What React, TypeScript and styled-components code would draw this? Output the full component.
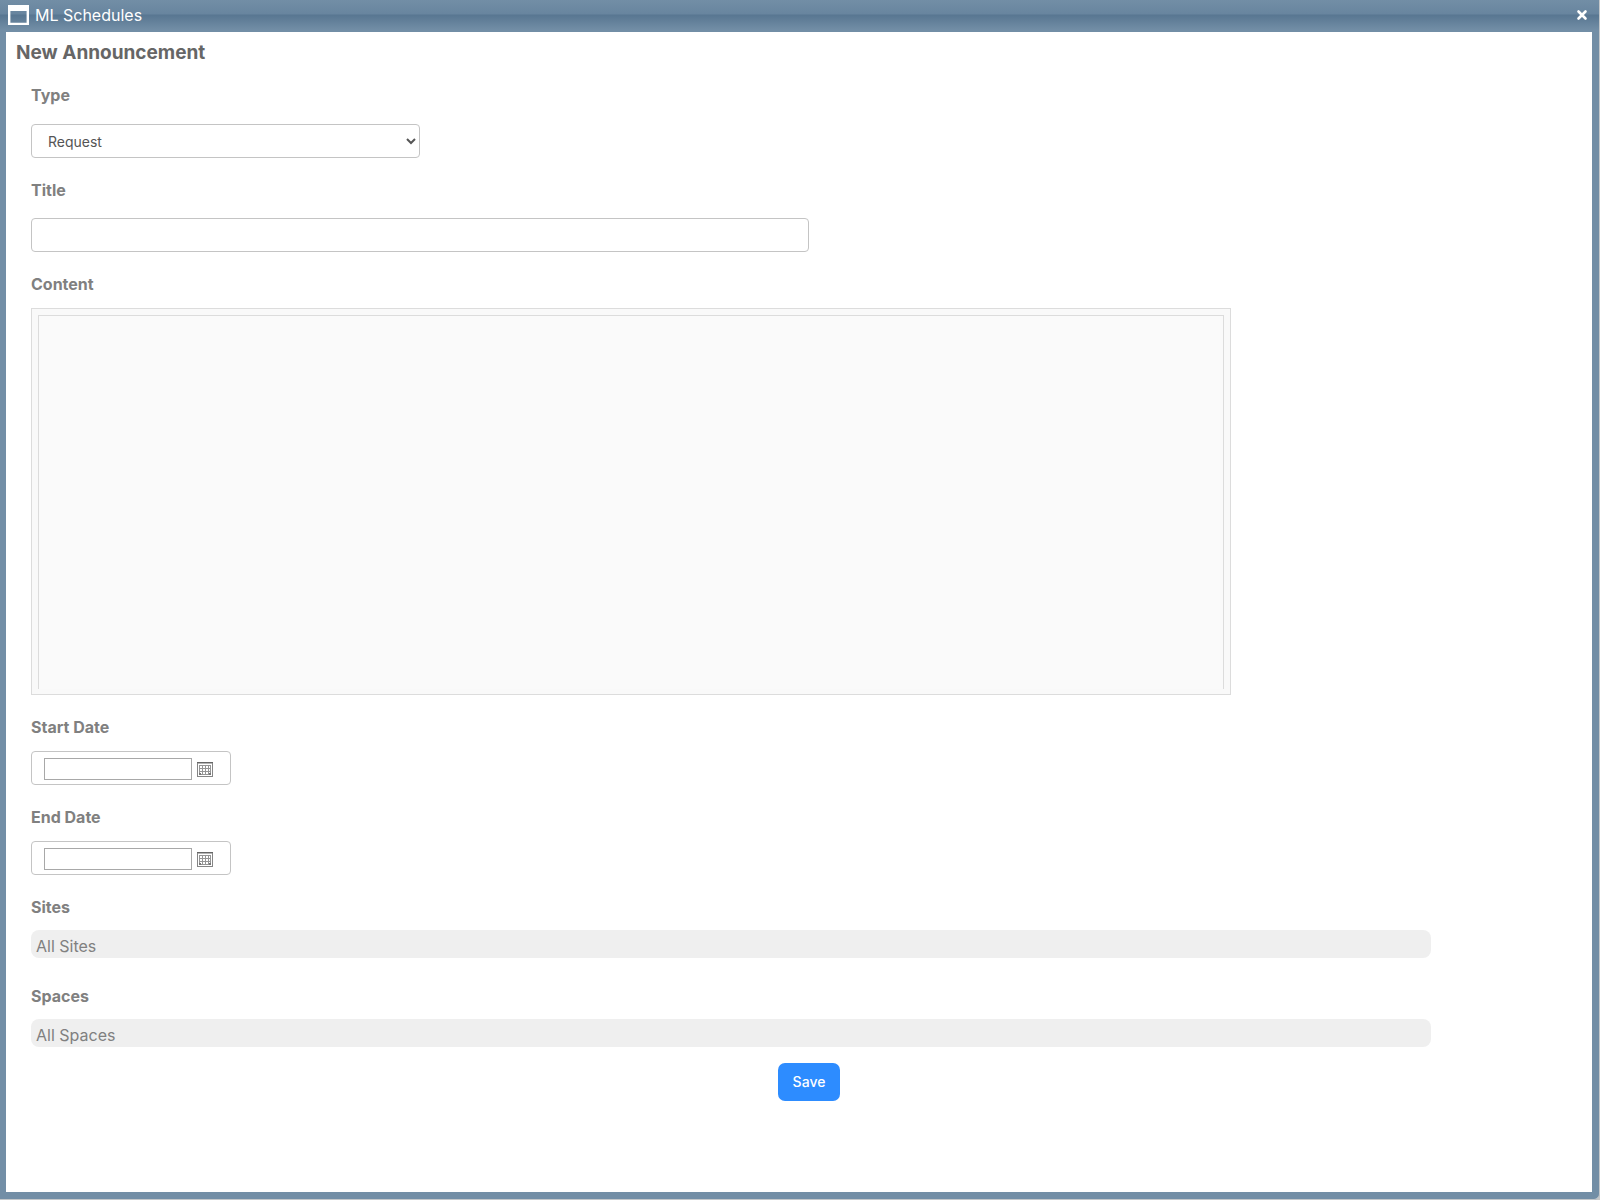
import React from "react";
import styled, { createGlobalStyle } from "styled-components";

const GlobalStyle = createGlobalStyle`
  *, *::before, *::after {
    box-sizing: border-box;
  }

  body {
    margin: 0;
    background: #c8c8c8;
    color: #808080;
    font-family: Inter, "Liberation Sans", sans-serif;
    font-size: 16px;
    line-height: 20px;
  }

  button, input, select, textarea {
    font-family: inherit;
  }
`;

const Window = styled.div`
  display: flex;
  flex-direction: column;
  min-height: 100vh;
  padding: 0 7px 7px 6px;
  border: solid #c3c7ca;
  border-width: 0 1px 1px 0;
  border-radius: 0 0 6px 0;
  background: #728ea6;
`;

const TitleBar = styled.header`
  display: flex;
  align-items: center;
  gap: 6px;
  height: 32px;
  margin: 0 -7px 0 -6px;
  padding: 0 11px 2px 8px;
  background: linear-gradient(#728ea6 0, #68859f 14px, #587691 15px, #728ea6 30px);
`;

const WindowTitle = styled.span`
  flex: 1;
  color: #fff;
`;

const CloseButton = styled.button`
  display: flex;
  padding: 0;
  border: 0;
  background: none;
  cursor: pointer;
`;

const Panel = styled.main`
  flex: 1;
  padding: 10px 5px 40px 10px;
  background: #fff;
`;

const Heading = styled.h1`
  margin: 0;
  color: #666;
  font-size: 19px;
  font-weight: 700;
  line-height: 22px;
`;

const Form = styled.form`
  display: flex;
  flex-direction: column;
  gap: 22px;
  padding: 21px 0 0 15px;
`;

const Field = styled.div<{ $gap: number }>`
  display: flex;
  flex-direction: column;
  align-items: flex-start;
  gap: ${({ $gap }) => $gap}px;
`;

const Label = styled.label`
  font-weight: 700;
`;

const TypeSelect = styled.select`
  width: 25%;
  height: 34px;
  padding: 6px 12px;
  border: 1px solid #c4c4c4;
  border-radius: 4px;
  background: #fff;
  color: #555;
  font-size: 14px;
`;

const TitleInput = styled.input`
  width: 50%;
  height: 34px;
  padding: 6px 12px;
  border: 1px solid #c4c4c4;
  border-radius: 4px;
  background: #fff;
  color: #555;
  font-size: 14px;
`;

const Editor = styled.div`
  display: flex;
  width: 1200px;
  max-width: 100%;
  height: 387px;
  padding: 6px 6px 5px;
  border: 1px solid #dcdcdc;
  background: #f9f9f9;
`;

const EditorArea = styled.textarea`
  flex: 1;
  border: solid #dcdcdc;
  border-width: 1px 1px 0;
  outline: 0;
  background: #fafafa;
  resize: none;
`;

const DateBox = styled.div`
  display: flex;
  align-items: center;
  gap: 5px;
  width: 200px;
  height: 34px;
  padding: 1px 12px 0;
  border: 1px solid #c4c4c4;
  border-radius: 4px;
`;

const DateInput = styled.input`
  width: 148px;
  height: 22px;
  border: 1px solid #a8a8a8;
  background: #fff;
`;

const IconButton = styled.button`
  display: flex;
  padding: 2px 0 0;
  border: 0;
  background: none;
  cursor: pointer;
`;

const PickList = styled.button`
  width: 90%;
  height: 28px;
  margin-bottom: 6px;
  padding: 4px 5px 0;
  border: 0;
  border-radius: 8px;
  background: #efefef;
  color: #808080;
  font-size: 16px;
  line-height: 20px;
  text-align: left;
`;

const Actions = styled.div`
  display: flex;
  justify-content: center;
  margin-top: -12px;
`;

const SaveButton = styled.button`
  height: 38px;
  padding: 0 15px 2px;
  border: 0;
  border-radius: 7px;
  background: #2d8cff;
  color: #fff;
  font-size: 14px;
  font-weight: 500;
  cursor: pointer;
`;

const WindowIcon = () => (
  <svg width="21" height="20" viewBox="0 0 21 20" aria-hidden="true">
    <path fill="#fff" fillRule="evenodd" d="M0 0H21V20H0ZM2.4 6V17.8H18.6V6Z" />
  </svg>
);

const CloseIcon = () => (
  <svg width="12" height="12" viewBox="0 0 12 12" aria-hidden="true">
    <path d="M2.5 2.5L9.5 9.5M9.5 2.5L2.5 9.5" stroke="#fff" strokeWidth="2.6" strokeLinecap="round" />
  </svg>
);

const CalendarIcon = () => (
  <svg width="16" height="15" viewBox="0 0 16 15" shapeRendering="crispEdges" aria-hidden="true">
    <path fill="#fff" stroke="#858585" d="M.5 .5H15.5V14.5H.5Z" />
    <path fill="#666" d="M0 0H16V1H0Z" />
    <path fill="#b5b5b5" d="M1 1H15V2H1Z" />
    <path fill="#959595" d="M2 3H14V4H2ZM2 6H14V7H2ZM2 9H14V10H2ZM2 12H14V13H2ZM2 3H3V13H2ZM5 3H6V13H5ZM8 3H9V13H8ZM11 3H12V13H11ZM13 3H14V13H13Z" />
    <path fill="#777" d="M2 11H4V13H2ZM12 11H14V13H12Z" />
  </svg>
);

function DateField({ id, label }: { id: string; label: string }) {
  return (
    <Field $gap={14}>
      <Label htmlFor={id}>{label}</Label>
      <DateBox>
        <DateInput id={id} type="text" />
        <IconButton type="button" aria-label={`Choose ${label}`}>
          <CalendarIcon />
        </IconButton>
      </DateBox>
    </Field>
  );
}

function PickField({ id, label, value }: { id: string; label: string; value: string }) {
  return (
    <Field $gap={13}>
      <Label htmlFor={id}>{label}</Label>
      <PickList id={id} type="button">{value}</PickList>
    </Field>
  );
}

export default function App() {
  return (
    <>
      <GlobalStyle />
      <Window>
        <TitleBar>
          <WindowIcon />
          <WindowTitle>ML Schedules</WindowTitle>
          <CloseButton type="button" aria-label="Close">
            <CloseIcon />
          </CloseButton>
        </TitleBar>
        <Panel>
          <Heading>New Announcement</Heading>
          <Form onSubmit={(event) => event.preventDefault()}>
            <Field $gap={19}>
              <Label htmlFor="type">Type</Label>
              <TypeSelect id="type">
                <option>Request</option>
              </TypeSelect>
            </Field>
            <Field $gap={18}>
              <Label htmlFor="title">Title</Label>
              <TitleInput id="title" type="text" />
            </Field>
            <Field $gap={14}>
              <Label htmlFor="content">Content</Label>
              <Editor>
                <EditorArea id="content" />
              </Editor>
            </Field>
            <DateField id="start-date" label="Start Date" />
            <DateField id="end-date" label="End Date" />
            <PickField id="sites" label="Sites" value="All Sites" />
            <PickField id="spaces" label="Spaces" value="All Spaces" />
            <Actions>
              <SaveButton type="submit">Save</SaveButton>
            </Actions>
          </Form>
        </Panel>
      </Window>
    </>
  );
}
